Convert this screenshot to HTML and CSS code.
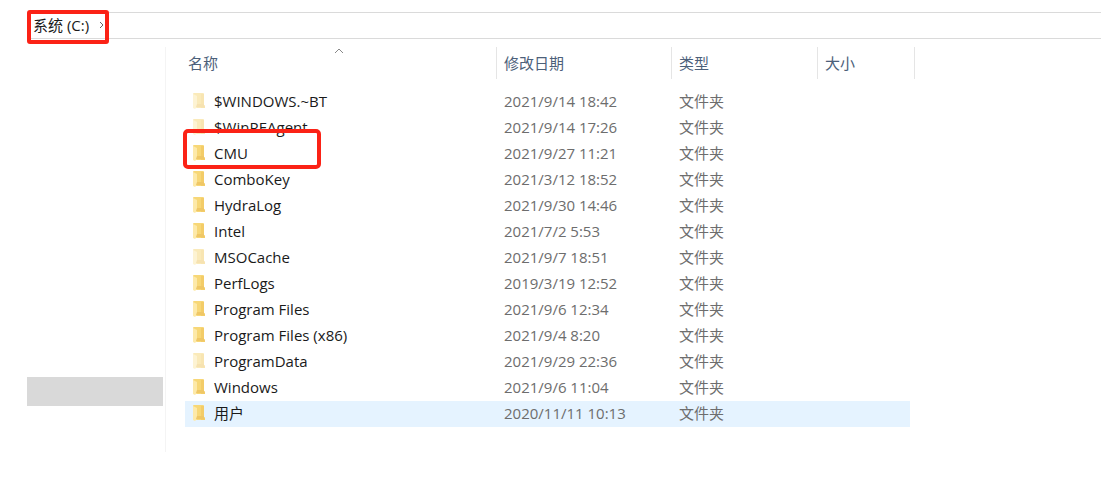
FILE: index.html
```html
<!DOCTYPE html>
<html lang="zh-CN">
<head>
    <meta charset="utf-8">
    <title>系统 (C:)</title>
    <link rel="stylesheet" href="styles.css">
</head>
<body>
    <svg class="symbols" aria-hidden="true">
        <symbol id="folder" viewBox="0 0 12 16">
            <path d="M1 0H10Q11 0 11 1V12L12 13V15H2L0 14V1Q0 0 1 0Z" fill="#f7d777"/>
            <path d="M8 1H11V12L12 13V15H8Z" fill="#f3cc68"/>
            <path d="M0 1L4 3V14L2 16L0 15Z" fill="#fde9a9"/>
            <path d="M4 11H11V14H3Z" fill="#efc766"/>
        </symbol>
    </svg>
    <div class="address-bar">
        <a class="crumb" href="#">系统 (C:)
            <svg class="chevron" viewBox="0 0 6 8"><path d="M1 1L4 4L1 7"/></svg>
        </a>
    </div>
    <div class="explorer">
        <div class="sidebar">
            <div class="sidebar-item"></div>
        </div>
        <div class="content">
            <table class="files">
                <colgroup>
                    <col class="col-name">
                    <col class="col-date">
                    <col class="col-type">
                    <col class="col-size">
                </colgroup>
                <thead>
                    <tr>
                        <th class="sorted">名称<svg class="sort-arrow" viewBox="0 0 10 6"><path d="M1 5L5 1L9 5"/></svg></th>
                        <th>修改日期</th>
                        <th>类型</th>
                        <th>大小</th>
                    </tr>
                </thead>
                <tbody>
                    <tr class="hidden-item"><td><svg class="folder"><use href="#folder"/></svg>$WINDOWS.~BT</td><td>2021/9/14 18:42</td><td>文件夹</td><td></td></tr>
                    <tr class="hidden-item"><td><svg class="folder"><use href="#folder"/></svg>$WinREAgent</td><td>2021/9/14 17:26</td><td>文件夹</td><td></td></tr>
                    <tr class="marked"><td><svg class="folder"><use href="#folder"/></svg>CMU</td><td>2021/9/27 11:21</td><td>文件夹</td><td></td></tr>
                    <tr><td><svg class="folder"><use href="#folder"/></svg>ComboKey</td><td>2021/3/12 18:52</td><td>文件夹</td><td></td></tr>
                    <tr><td><svg class="folder"><use href="#folder"/></svg>HydraLog</td><td>2021/9/30 14:46</td><td>文件夹</td><td></td></tr>
                    <tr><td><svg class="folder"><use href="#folder"/></svg>Intel</td><td>2021/7/2 5:53</td><td>文件夹</td><td></td></tr>
                    <tr class="hidden-item"><td><svg class="folder"><use href="#folder"/></svg>MSOCache</td><td>2021/9/7 18:51</td><td>文件夹</td><td></td></tr>
                    <tr><td><svg class="folder"><use href="#folder"/></svg>PerfLogs</td><td>2019/3/19 12:52</td><td>文件夹</td><td></td></tr>
                    <tr><td><svg class="folder"><use href="#folder"/></svg>Program Files</td><td>2021/9/6 12:34</td><td>文件夹</td><td></td></tr>
                    <tr><td><svg class="folder"><use href="#folder"/></svg>Program Files (x86)</td><td>2021/9/4 8:20</td><td>文件夹</td><td></td></tr>
                    <tr class="hidden-item"><td><svg class="folder"><use href="#folder"/></svg>ProgramData</td><td>2021/9/29 22:36</td><td>文件夹</td><td></td></tr>
                    <tr><td><svg class="folder"><use href="#folder"/></svg>Windows</td><td>2021/9/6 11:04</td><td>文件夹</td><td></td></tr>
                    <tr class="hover"><td><svg class="folder"><use href="#folder"/></svg>用户</td><td>2020/11/11 10:13</td><td>文件夹</td><td></td></tr>
                </tbody>
            </table>
        </div>
    </div>
</body>
</html>
```

FILE: styles.css
```css
*,
*::after {
    box-sizing: border-box;
}
body {
    margin: 0;
    padding: 12px 5px 0 27px;
    background-color: #fff;
    font-family: "Open Sans", "Noto Sans CJK SC", sans-serif;
    font-size: 15px;
    color: #1a1a1a;
}
.symbols {
    position: absolute;
    width: 0;
    height: 0;
}
.address-bar {
    position: relative;
    height: 27px;
    border-top: 1px solid #dadada;
    border-bottom: 1px solid #dadada;
}
/* red marker over the path */
.crumb {
    position: absolute;
    top: -3px;
    left: 0;
    display: flex;
    align-items: center;
    gap: 10px;
    width: 82px;
    height: 34px;
    padding: 0 0 4px 2px;
    border: 4px solid #fb2216;
    border-radius: 3px;
    color: #1a1a1a;
    line-height: 20px;
    text-decoration: none;
    white-space: nowrap;
}
.chevron {
    flex: none;
    width: 6px;
    height: 8px;
    fill: none;
    stroke: #666;
}
.explorer {
    display: flex;
    margin-top: 8px;
}
.sidebar {
    width: 139px;
    height: 405px;
    padding: 330px 2px 0 0;
    border-right: 1px solid #f4f4f4;
}
.sidebar-item {
    height: 29px;
    background-color: #d9d9d9;
}
.content {
    flex: 1;
    padding-left: 19px;
}
.files {
    width: 730px;
    table-layout: fixed;
    border-collapse: separate;
    border-spacing: 0;
}
.col-name {
    width: 312px;
}
.col-date {
    width: 175px;
}
.col-type {
    width: 146px;
}
.files th {
    position: relative;
    height: 32px;
    padding: 0 0 2px 7px;
    border-right: 1px solid #e5e5e5;
    color: #4c607a;
    font-weight: normal;
    text-align: left;
}
.files th.sorted {
    padding-left: 3px;
}
.sort-arrow {
    position: absolute;
    top: 1px;
    left: 149px;
    width: 10px;
    height: 6px;
    fill: none;
    stroke: #888;
}
.files tbody::before {
    content: "";
    display: block;
    height: 10px;
}
.files td {
    height: 26px;
    padding: 0 0 2px 7px;
    color: #6d6d6d;
    line-height: 20px;
    white-space: nowrap;
}
.files td:first-child {
    position: relative;
    padding-left: 8px;
    color: #1a1a1a;
}
.folder {
    width: 12px;
    height: 16px;
    margin-right: 9px;
    vertical-align: -2px;
}
.hidden-item .folder {
    opacity: 0.5;
}
.hover {
    background: linear-gradient(#e5f3ff, #e5f3ff) no-repeat;
    background-size: calc(100% - 5px) 100%;
}
/* red marker over the folder name */
.marked td:first-child::after {
    content: "";
    position: absolute;
    top: -12px;
    left: -2px;
    width: 138px;
    height: 40px;
    border: 4px solid #fb2216;
    border-radius: 5px;
}
```
